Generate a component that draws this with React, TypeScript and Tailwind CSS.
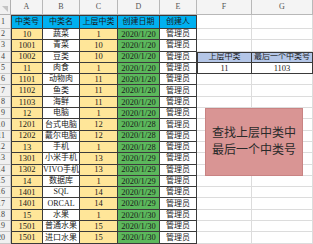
const cols = ["A", "B", "C", "D", "E", "F", "G"];

const rows: [number, string, number, string][] = [
  [10, "蔬菜", 1, "2020/1/20"],
  [1001, "青菜", 10, "2020/1/20"],
  [1002, "豆类", 10, "2020/1/20"],
  [11, "肉食", 1, "2020/1/20"],
  [1101, "动物肉", 11, "2020/1/20"],
  [1102, "鱼类", 11, "2020/1/20"],
  [1103, "海鲜", 11, "2020/1/20"],
  [12, "电脑", 1, "2020/1/20"],
  [1201, "台式电脑", 12, "2020/1/28"],
  [1202, "戴尔电脑", 12, "2020/1/28"],
  [13, "手机", 1, "2020/1/28"],
  [1301, "小米手机", 13, "2020/1/29"],
  [1302, "VIVO手机", 13, "2020/1/29"],
  [14, "数据库", 1, "2020/1/29"],
  [1401, "SQL", 14, "2020/1/29"],
  [1401, "ORCAL", 14, "2020/1/29"],
  [15, "水果", 1, "2020/1/30"],
  [1501, "普通水果", 15, "2020/1/30"],
  [1501, "进口水果", 15, "2020/1/30"],
];

const font = "font-['Liberation_Serif','Noto_Sans_CJK_SC',serif]";
const cell = "flex items-center justify-center overflow-hidden whitespace-nowrap border-r border-b";
const tb = "border-[#3a3a3a]";
const grid = "border-[#dcdcdc]";

// the sheet is cropped through the row-number column, so only the last digit shows
function RowHead({ n }: { n: number }) {
  return (
    <div className="flex items-center justify-end overflow-hidden border-r border-b border-[#c8c8c8] bg-[#f0f0f0] pr-[5px] text-[8px] text-[#444]">
      <span className="shrink-0">{n}</span>
    </div>
  );
}

export default function App() {
  return (
    <div className={`relative h-[244px] w-[313px] overflow-hidden bg-white ${font} text-[#1a1a1a]`}>
      <div className="grid grid-cols-[11px_32px_37px_38px_42px_37px_55px_61px] grid-rows-[15px_14px_repeat(20,11.3px)]">
        {/* column letters */}
        <div className="relative border-r border-b border-[#b0b0b0] bg-[#f0f0f0]">
          <div className="absolute bottom-[2px] right-[2px] h-0 w-0 border-l-[6px] border-t-[6px] border-l-transparent border-t-[#c4c4c4]" />
        </div>
        {cols.map((c) => (
          <div
            key={c}
            className="flex items-end justify-center border-r border-b border-[#b8b8b8] bg-[#f4f4f4] pb-[1px] text-[8px] text-[#555]"
          >
            {c}
          </div>
        ))}

        {/* header row */}
        <RowHead n={1} />
        {["中类号", "中类名", "上层中类", "创建日期", "创建人"].map((h, i) => (
          <div
            key={h}
            className={`${cell} ${tb} border-t bg-[#00b0f0] text-[8px] ${i === 0 ? "border-l" : ""}`}
          >
            {h}
          </div>
        ))}
        <div className={`${cell} ${grid}`} />
        <div className={`${cell} ${grid}`} />

        {rows.map(([id, name, parent, date], i) => (
          <div key={i} className="contents">
            <RowHead n={i + 2} />
            <div className={`${cell} ${tb} border-l bg-[#ffe699] text-[8.5px]`}>{id}</div>
            <div className={`${cell} ${tb} bg-white text-[8px]`}>{name}</div>
            <div className={`${cell} ${tb} bg-[#ffe699] text-[8.5px]`}>{parent}</div>
            <div className={`${cell} ${tb} bg-[#5cb85c] text-[8.5px]`}>{date}</div>
            <div className={`${cell} ${tb} bg-white text-[8px]`}>管理员</div>
            {i === 2 ? (
              <>
                <div className={`${cell} ${tb} border-t border-l bg-[#b4c6e7] text-[8px]`}>上层中类</div>
                <div className={`${cell} ${tb} border-t bg-[#b4c6e7] text-[8px]`}>最后一个中类号</div>
              </>
            ) : i === 3 ? (
              <>
                <div className={`${cell} ${tb} border-l bg-white text-[8.5px]`}>11</div>
                <div className={`${cell} ${tb} bg-white text-[8.5px]`}>1103</div>
              </>
            ) : (
              <>
                <div className={`${cell} ${grid}`} />
                <div className={`${cell} ${grid}`} />
              </>
            )}
          </div>
        ))}
      </div>

      <div className="absolute left-[205px] top-[108px] flex h-[68px] w-[98px] flex-col items-center justify-center border border-[#c98383] bg-[#d99594] text-[12px] leading-[17px] text-[#2a2a2a]">
        <span>查找上层中类中</span>
        <span>最后一个中类号</span>
      </div>
    </div>
  );
}
